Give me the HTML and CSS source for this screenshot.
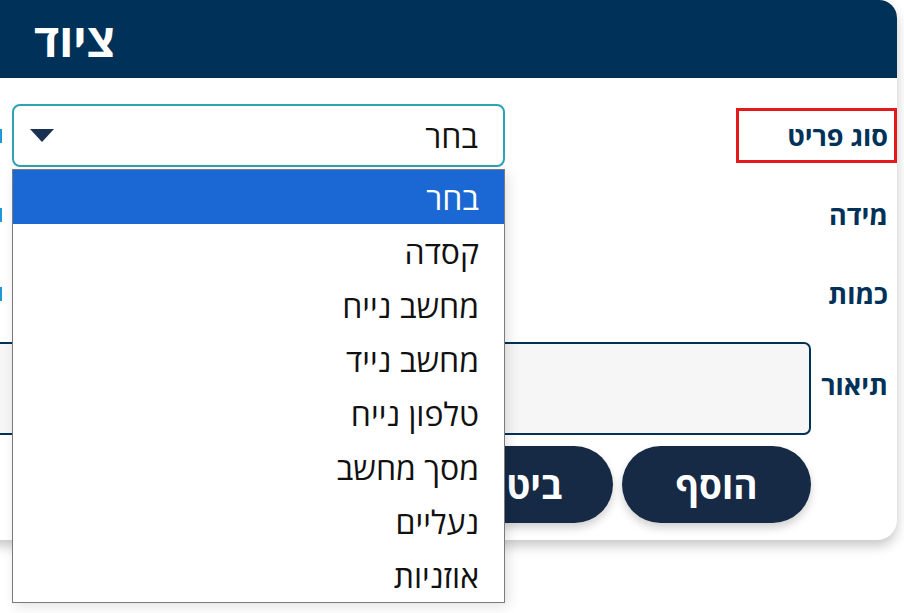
FILE: index.html
```html
<!DOCTYPE html>
<html lang="he">
<head>
<meta charset="utf-8">
<title>ציוד</title>
<link rel="stylesheet" href="styles.css">
</head>
<body>
<div class="card" dir="rtl">
  <header class="card-head">
    <h1 class="card-title">ציוד</h1>
  </header>
  <form class="card-body">
    <div class="row">
      <label class="lbl lbl-flag">סוג פריט</label>
      <div class="field">
        <div class="select-wrap">
          <div class="select">
            <span class="select-value">בחר</span>
            <svg class="select-arrow" width="24" height="13" viewBox="0 0 24 13"><path d="M0 0H24L12 13Z" fill="#1b3152"/></svg>
          </div>
          <ul class="menu">
            <li class="opt opt-active">בחר</li>
            <li class="opt">קסדה</li>
            <li class="opt">מחשב נייח</li>
            <li class="opt">מחשב נייד</li>
            <li class="opt">טלפון נייח</li>
            <li class="opt">מסך מחשב</li>
            <li class="opt">נעליים</li>
            <li class="opt">אוזניות</li>
          </ul>
        </div>
        <span class="mark"></span>
      </div>
    </div>
    <div class="row">
      <label class="lbl">מידה</label>
      <div class="field">
        <div class="select"></div>
        <span class="mark"></span>
      </div>
    </div>
    <div class="row">
      <label class="lbl">כמות</label>
      <div class="field">
        <div class="select"></div>
        <span class="mark"></span>
      </div>
    </div>
    <div class="row row-text">
      <label class="lbl lbl-text">תיאור</label>
      <div class="field">
        <div class="textarea"></div>
      </div>
    </div>
    <div class="actions">
      <button type="button" class="btn">הוסף</button>
      <button type="button" class="btn">ביטול</button>
    </div>
  </form>
</div>
</body>
</html>
```
FILE: styles.css
```css
* { box-sizing: border-box; }
html, body { margin: 0; padding: 0; background: #fff; }
body {
  width: 904px;
  height: 613px;
  overflow: hidden;
  font-family: "Open Sans", "Liberation Sans", "DejaVu Sans", sans-serif;
}
.card {
  width: 917px;
  margin-left: -20px;
  background: #fff;
  border-radius: 18px 18px 20px 20px;
  box-shadow: 0 6px 12px rgba(0, 0, 0, 0.22);
}
.card-head {
  height: 78px;
  background: #003259;
  border-radius: 18px 18px 0 0;
  display: flex;
  justify-content: flex-end;
  align-items: center;
  padding-left: 54px;
}
.card-title {
  margin: 0;
  color: #fff;
  font-size: 46px;
  font-weight: 700;
  line-height: 1;
}
.card-body {
  display: flex;
  flex-direction: column;
  padding: 26px 0 17px 10px;
}
.row {
  display: flex;
  align-items: center;
  height: 63px;
  margin-bottom: 16px;
}
.row-text {
  height: 93px;
  margin-top: 1px;
  margin-bottom: 11px;
}
.lbl {
  flex: none;
  width: 86px;
  padding-right: 9px;
  color: #003259;
  font-size: 27px;
  font-weight: 700;
  white-space: nowrap;
}
.lbl-flag {
  width: 161px;
  height: 55px;
  border: 3px solid #e3191c;
  padding-right: 6px;
  display: flex;
  align-items: center;
}
.lbl-text { padding-bottom: 8px; }
.field {
  flex: 1;
  display: flex;
  justify-content: flex-end;
  align-items: center;
  gap: 10px;
  height: 100%;
}
.mark {
  width: 12px;
  height: 14px;
  background: #1f97d8;
}
.select-wrap { position: relative; }
.select {
  width: 493px;
  height: 63px;
  border: 2px solid #2fa2b4;
  border-radius: 8px;
  background: #fff;
  display: flex;
  align-items: center;
  justify-content: space-between;
  padding: 0 25px 0 16px;
}
.select-value {
  font-size: 32px;
  color: #111;
}
.menu {
  position: absolute;
  top: calc(100% + 2px);
  left: 0;
  width: 493px;
  margin: 0;
  padding: 0;
  list-style: none;
  background: #fff;
  border: 1px solid #7b7b7b;
  box-shadow: 3px 3px 12px rgba(0, 0, 0, 0.12);
  z-index: 5;
}
.opt {
  height: 54px;
  display: flex;
  align-items: center;
  padding-right: 25px;
  font-size: 32px;
  color: #111;
}
.opt-active {
  background: #1b67d3;
  color: #fff;
}
.textarea {
  flex: 1;
  height: 93px;
  border: 2px solid #003259;
  border-radius: 7px;
  background: #f6f6f6;
}
.actions {
  display: flex;
  gap: 9px;
  margin-right: 86px;
}
.btn {
  width: 189px;
  height: 77px;
  border: none;
  border-radius: 39px;
  background: #162a46;
  color: #fff;
  font-family: inherit;
  font-size: 37px;
  font-weight: 700;
  box-shadow: 0 5px 8px rgba(0, 0, 0, 0.18);
}
```
